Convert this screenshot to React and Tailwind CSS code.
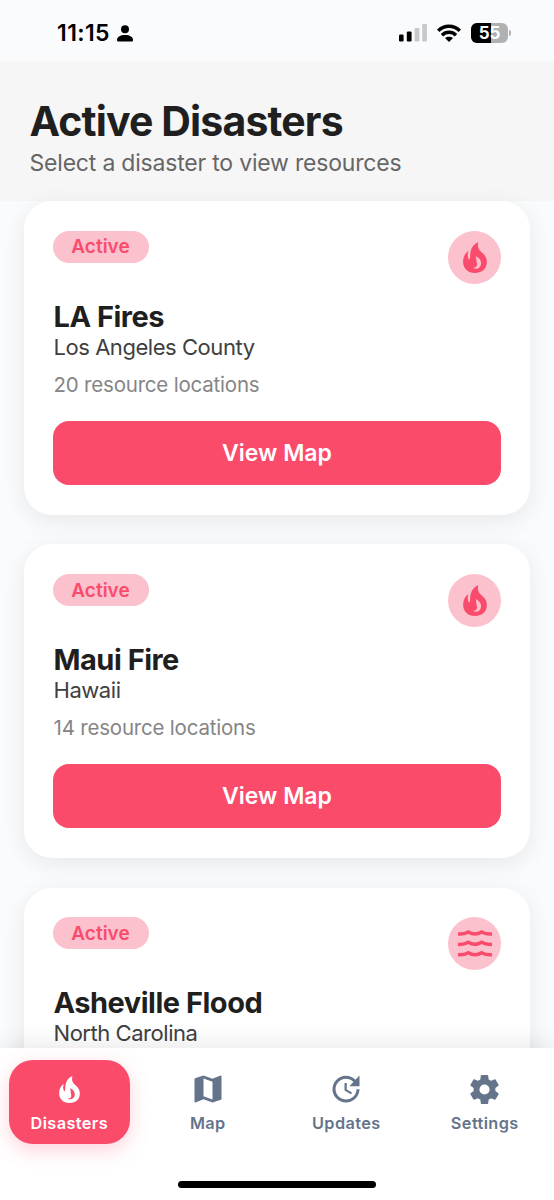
import React from 'react';
import { MdMap, MdUpdate } from 'react-icons/md';

const disasters = [
  { id: 1, title: 'LA Fires', place: 'Los Angeles County', count: 20, type: 'fire' },
  { id: 2, title: 'Maui Fire', place: 'Hawaii', count: 14, type: 'fire' },
  { id: 3, title: 'Asheville Flood', place: 'North Carolina', type: 'flood' },
];

function FlameIcon({ className }) {
  return (
    <svg className={className} viewBox="49 38 72 94" fill="currentColor">
      <path
        fillRule="evenodd"
        d="M95 38C92 53 95 61 105 69C116 78 121 87 121 99C121 119 107 132 85 132C63 132 49 118 49 98C49 83 55 72 65 65C62 75 62 84 67 92C72 87 69 77 72 65C75 52 84 43 95 38ZM87 81C91 91 88 96 91 103C93 110 89 116 79 117C90 122 101 117 103 106C105 96 99 85 87 81Z"
      />
    </svg>
  );
}

function WavesIcon({ className }) {
  return (
    <svg className={className} viewBox="33 46 102 79" fill="none" stroke="currentColor" strokeWidth="10.5">
      <path d="M33 57C46 58 53 57 64 51C77 59 91 59 104 51C115 57 122 58 135 57" />
      <path d="M33 88C46 89 53 88 64 82C77 90 91 90 104 82C115 88 122 89 135 88" />
      <path d="M33 119C46 120 53 119 64 113C77 121 91 121 104 113C115 119 122 120 135 119" />
    </svg>
  );
}

function CogIcon({ className }) {
  return (
    <svg className={className} viewBox="0 0 24 24" fill="currentColor">
      <path d="M12,15.5A3.5,3.5 0 0,1 8.5,12A3.5,3.5 0 0,1 12,8.5A3.5,3.5 0 0,1 15.5,12A3.5,3.5 0 0,1 12,15.5M19.43,12.97C19.47,12.65 19.5,12.33 19.5,12C19.5,11.67 19.47,11.34 19.43,11L21.54,9.37C21.73,9.22 21.78,8.95 21.66,8.73L19.66,5.27C19.54,5.05 19.27,4.96 19.05,5.05L16.56,6.05C16.04,5.66 15.5,5.32 14.87,5.07L14.5,2.42C14.46,2.18 14.25,2 14,2H10C9.75,2 9.54,2.18 9.5,2.42L9.13,5.07C8.5,5.32 7.96,5.66 7.44,6.05L4.95,5.05C4.73,4.96 4.46,5.05 4.34,5.27L2.34,8.73C2.21,8.95 2.27,9.22 2.46,9.37L4.57,11C4.53,11.34 4.5,11.67 4.5,12C4.5,12.33 4.53,12.65 4.57,12.97L2.46,14.63C2.27,14.78 2.21,15.05 2.34,15.27L4.34,18.73C4.46,18.95 4.73,19.03 4.95,18.95L7.44,17.94C7.96,18.34 8.5,18.68 9.13,18.93L9.5,21.58C9.54,21.82 9.75,22 10,22H14C14.25,22 14.46,21.82 14.5,21.58L14.87,18.93C15.5,18.67 16.04,18.34 16.56,17.94L19.05,18.95C19.27,19.03 19.54,18.95 19.66,18.73L21.66,15.27C21.78,15.05 21.73,14.78 21.54,14.63L19.43,12.97Z" />
    </svg>
  );
}

const tabs = [
  { label: 'Disasters', icon: FlameIcon, size: 'w-[21px] h-[27px]', active: true },
  { label: 'Map', icon: MdMap, size: 'w-9 h-9' },
  { label: 'Updates', icon: MdUpdate, size: 'w-9 h-9' },
  { label: 'Settings', icon: CogIcon, size: 'w-[35px] h-[35px]' },
];

function StatusBar() {
  return (
    <div className="h-[61px] shrink-0 bg-[#f9fbfd] flex items-center justify-between pl-[57px] pr-[43px] pt-[5px]">
      <div className="flex items-center gap-[7px]">
        <span className="text-[23px] leading-none font-semibold text-black tracking-[0.4px]">11:15</span>
        <svg className="w-4 h-[17px]" viewBox="0 0 16 17" fill="#000">
          <circle cx="8" cy="4.3" r="4" />
          <path d="M0 15c0-3 3.2-5 8-5s8 2 8 5c0 1-.5 1.6-1.5 1.6h-13C.5 16.6 0 16 0 15z" />
        </svg>
      </div>
      <div className="flex items-center">
        <svg className="w-7 h-[18px]" viewBox="0 0 28 18">
          <rect x="0" y="10.5" width="4.6" height="7" rx="1.2" fill="#000" />
          <rect x="7.8" y="7.5" width="4.8" height="10" rx="1.2" fill="#000" />
          <rect x="15.6" y="4" width="4.8" height="13.5" rx="1.2" fill="#c8c9cb" />
          <rect x="23.2" y="0" width="4.8" height="17.5" rx="1.2" fill="#c8c9cb" />
        </svg>
        <svg className="w-6 h-[18px] ml-2.5" viewBox="0 0 24 18" fill="none" stroke="#000" strokeWidth="3.5">
          <path d="M1.2 6.7C7.4.6 16.6.6 22.8 6.7" />
          <path d="M5 11.2c4-3.9 10-3.9 14 0" />
          <path d="M12 18l-4-3.9c2.3-1.900 5.700-1.900 8 0z" fill="#000" stroke="none" />
        </svg>
        <div className="relative ml-2.5 w-[37px] h-5 rounded-[6px] overflow-hidden flex items-center justify-center bg-[#b0b1b3]">
          <div className="absolute inset-y-0 left-0 w-5 bg-black" />
          <span className="relative text-white text-[17px] leading-none font-bold">55</span>
        </div>
        <div className="ml-px w-[2px] h-[6px] rounded-r-full bg-[#b0b1b3]" />
      </div>
    </div>
  );
}

function DisasterCard({ item }) {
  return (
    <div className="h-[314px] shrink-0 rounded-[28px] bg-white px-[29px] pt-[29.5px] shadow-[0_6px_24px_rgba(0,0,0,0.08)]">
      <div className="flex justify-between items-start">
        <span className="h-8 w-[96px] rounded-full bg-[#fbc1cc] text-[#f94c6d] text-[19px] font-semibold flex items-center justify-center pt-0.5 pr-px">
          Active
        </span>
        <div className="w-[53px] h-[53px] rounded-full bg-[#fbc1cc] flex items-center justify-center text-[#f94c6d]">
          {item.type === 'fire' ? (
            <FlameIcon className="w-6 h-[31px] mt-px" />
          ) : (
            <WavesIcon className="w-[34px] h-[27px]" />
          )}
        </div>
      </div>
      <h2 className="mt-[16.4px] pl-[0.5px] text-[29px] leading-[34px] font-bold text-[#1f1f1f] tracking-[-0.5px]">
        {item.title}
      </h2>
      <p className="pl-[0.5px] text-[22px] leading-[27px] text-[#404040] tracking-[-0.45px]">{item.place}</p>
      {item.count && (
        <>
          <p className="mt-3 pl-[0.5px] text-[20.5px] leading-[24px] text-[#858585] tracking-[-0.2px]">
            {item.count} resource locations
          </p>
          <button className="mt-6 w-full h-16 rounded-2xl bg-[#fa4b6b] text-white text-[23px] font-semibold pt-px">
            View Map
          </button>
        </>
      )}
    </div>
  );
}

function TabBar() {
  return (
    <nav className="relative h-[152px] shrink-0 bg-white shadow-[0_-4px_22px_rgba(0,0,0,0.09)]">
      <div className="grid grid-cols-4 pt-3">
        {tabs.map(({ label, icon: Icon, size, active }) => (
          <div
            key={label}
            className={
              active
                ? 'mx-[9px] h-[84px] rounded-[24px] bg-[#fa4b6b] text-white shadow-[0_6px_20px_rgba(250,75,107,0.25)] flex flex-col items-center pt-[11px]'
                : 'mx-[9px] h-[84px] text-[#64748b] flex flex-col items-center pt-[11px]'
            }
          >
            <div className="h-9 flex items-center justify-center">
              <Icon className={size} />
            </div>
            <span className="mt-[6px] text-[16.3px] leading-[20px] font-semibold tracking-[0.4px]">{label}</span>
          </div>
        ))}
      </div>
      <div className="mt-[37px] mx-auto w-[198px] h-[7px] rounded-full bg-black" />
    </nav>
  );
}

export default function App() {
  return (
    <div className="w-[554px] h-[1200px] overflow-hidden flex flex-col bg-[#f9fbfd] font-['Inter','Liberation_Sans',sans-serif]">
      <StatusBar />
      <header className="h-[140px] shrink-0 bg-[#f6f6f6] px-[29.5px] pt-[35px]">
        <h1 className="text-[41px] leading-[50px] font-bold text-[#1f1f1f] tracking-[-0.86px]">Active Disasters</h1>
        <p className="mt-[3px] text-[23px] leading-[28px] text-[#666] tracking-[-0.2px]">
          Select a disaster to view resources
        </p>
      </header>
      {/* negative margin lets the first card's shadow fall on the header */}
      <main className="relative flex-1 min-h-0 -mt-10 pt-10 px-6 flex flex-col gap-[29.3px] overflow-hidden">
        {disasters.map((item) => (
          <DisasterCard key={item.id} item={item} />
        ))}
      </main>
      <TabBar />
    </div>
  );
}
